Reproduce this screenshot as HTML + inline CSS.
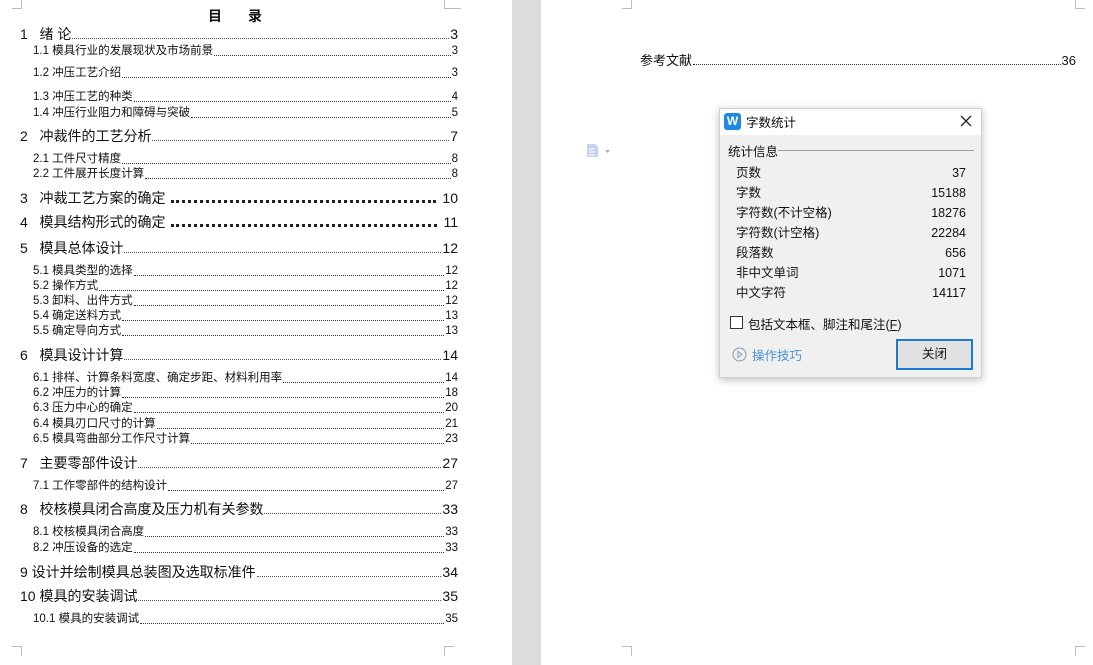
<!DOCTYPE html><html><head><meta charset="utf-8"><style>
*{margin:0;padding:0;box-sizing:border-box}
body{width:1093px;height:665px;background:#fff;position:relative;overflow:hidden;font-family:"Liberation Sans","Noto Sans CJK SC",sans-serif;color:#111}
.band{position:absolute;left:512px;top:0;width:29px;height:665px;background:#dcdcde}
.l{position:absolute;display:flex;align-items:flex-end;white-space:nowrap;line-height:1;margin-top:2px}
.l .d{flex:1;border-bottom:1px dotted #333;margin:0 1px 2px}
.m{left:20px;width:438px;font-size:14px}
.s{left:33px;width:425px;font-size:11.5px}
.m .d{border-bottom:1px dotted #555}
.b .d{border-bottom:3px dotted #222;margin:0 6px 2px}
.c{position:absolute;width:10px;height:10px;border-color:#bbb;border-style:solid;border-width:0}
</style></head><body>
<div class="band"></div>
<div class="c" style="left:12px;top:-1px;border-right-width:1px;border-bottom-width:1px"></div>
<div class="c" style="left:444px;top:-1px;border-left-width:1px;border-bottom-width:1px;width:17px"></div>
<div class="c" style="left:12px;top:646px;border-right-width:1px;border-top-width:1px"></div>
<div class="c" style="left:444px;top:646px;border-left-width:1px;border-top-width:1px"></div>
<div class="c" style="left:622px;top:-1px;border-right-width:1px;border-bottom-width:1px"></div>
<div class="c" style="left:1075px;top:-1px;border-left-width:1px;border-bottom-width:1px"></div>
<div class="c" style="left:622px;top:646px;border-right-width:1px;border-top-width:1px"></div>
<div class="c" style="left:1075px;top:646px;border-left-width:1px;border-top-width:1px"></div>
<div style="position:absolute;left:208px;top:6px;font-size:14px;font-weight:bold;letter-spacing:26px">目录</div>
<div class="l m" style="top:25px"><span>1&nbsp;&nbsp;&nbsp;绪&nbsp;论</span><span class="d"></span><span>3</span></div>
<div class="l s" style="top:44px"><span>1.1 模具行业的发展现状及市场前景</span><span class="d"></span><span>3</span></div>
<div class="l s" style="top:66px"><span>1.2 冲压工艺介绍</span><span class="d"></span><span>3</span></div>
<div class="l s" style="top:90px"><span>1.3 冲压工艺的种类</span><span class="d"></span><span>4</span></div>
<div class="l s" style="top:106px"><span>1.4 冲压行业阻力和障碍与突破</span><span class="d"></span><span>5</span></div>
<div class="l m" style="top:127px"><span>2&nbsp;&nbsp;&nbsp;冲裁件的工艺分析</span><span class="d"></span><span>7</span></div>
<div class="l s" style="top:152px"><span>2.1 工件尺寸精度</span><span class="d"></span><span>8</span></div>
<div class="l s" style="top:167px"><span>2.2 工件展开长度计算</span><span class="d"></span><span>8</span></div>
<div class="l m b" style="top:189px"><span>3&nbsp;&nbsp;&nbsp;冲裁工艺方案的确定</span><span class="d"></span><span>10</span></div>
<div class="l m b" style="top:213px"><span>4&nbsp;&nbsp;&nbsp;模具结构形式的确定</span><span class="d"></span><span>11</span></div>
<div class="l m" style="top:239px"><span>5&nbsp;&nbsp;&nbsp;模具总体设计</span><span class="d"></span><span>12</span></div>
<div class="l s" style="top:264px"><span>5.1 模具类型的选择</span><span class="d"></span><span>12</span></div>
<div class="l s" style="top:279px"><span>5.2 操作方式</span><span class="d"></span><span>12</span></div>
<div class="l s" style="top:294px"><span>5.3 卸料、出件方式</span><span class="d"></span><span>12</span></div>
<div class="l s" style="top:309px"><span>5.4 确定送料方式</span><span class="d"></span><span>13</span></div>
<div class="l s" style="top:324px"><span>5.5 确定导向方式</span><span class="d"></span><span>13</span></div>
<div class="l m" style="top:346px"><span>6&nbsp;&nbsp;&nbsp;模具设计计算</span><span class="d"></span><span>14</span></div>
<div class="l s" style="top:371px"><span>6.1 排样、计算条料宽度、确定步距、材料利用率</span><span class="d"></span><span>14</span></div>
<div class="l s" style="top:386px"><span>6.2 冲压力的计算</span><span class="d"></span><span>18</span></div>
<div class="l s" style="top:401px"><span>6.3 压力中心的确定</span><span class="d"></span><span>20</span></div>
<div class="l s" style="top:417px"><span>6.4 模具刃口尺寸的计算</span><span class="d"></span><span>21</span></div>
<div class="l s" style="top:432px"><span>6.5 模具弯曲部分工作尺寸计算</span><span class="d"></span><span>23</span></div>
<div class="l m" style="top:454px"><span>7&nbsp;&nbsp;&nbsp;主要零部件设计</span><span class="d"></span><span>27</span></div>
<div class="l s" style="top:479px"><span>7.1 工作零部件的结构设计</span><span class="d"></span><span>27</span></div>
<div class="l m" style="top:500px"><span>8&nbsp;&nbsp;&nbsp;校核模具闭合高度及压力机有关参数</span><span class="d"></span><span>33</span></div>
<div class="l s" style="top:525px"><span>8.1 校核模具闭合高度</span><span class="d"></span><span>33</span></div>
<div class="l s" style="top:541px"><span>8.2 冲压设备的选定</span><span class="d"></span><span>33</span></div>
<div class="l m" style="top:563px"><span>9 设计并绘制模具总装图及选取标准件</span><span class="d"></span><span>34</span></div>
<div class="l m" style="top:587px"><span>10 模具的安装调试</span><span class="d"></span><span>35</span></div>
<div class="l s" style="top:612px"><span>10.1 模具的安装调试</span><span class="d"></span><span>35</span></div>
<div class="l" style="left:640px;width:436px;top:52px;font-size:13px"><span>参考文献</span><span class="d"></span><span>36</span></div>
<svg style="position:absolute;left:586px;top:143px" width="24" height="16"><path d="M1 1h8l3 3v10H1z" fill="#c5d3ea"/><path d="M3 6h6M3 9h6M3 12h6" stroke="#fff"/><path d="M19 7h5l-2.5 3z" fill="#aaa"/></svg>
<div style="position:absolute;left:719px;top:108px;width:263px;height:270px;background:#f0f0f0;border:1px solid #d0d0d0;box-shadow:0 2px 8px rgba(0,0,0,.25)">
<div style="height:26px;background:#fff;position:relative">
<div style="position:absolute;left:4px;top:4px;width:17px;height:17px;background:#1e88e5;border-radius:3px;color:#fff;font-size:12px;font-weight:bold;text-align:center;line-height:17px">W</div>
<div style="position:absolute;left:26px;top:3px;font-size:12.5px">字数统计</div>
<svg style="position:absolute;left:240px;top:6px" width="12" height="12"><path d="M1 1L11 11M11 1L1 11" stroke="#222" stroke-width="1.3"/></svg></div>
<div style="position:absolute;left:8px;top:32px;font-size:12.5px">统计信息</div>
<div style="position:absolute;left:58px;top:41px;width:196px;border-top:1px solid #999"></div>
<div style="position:absolute;left:16px;top:54px;width:230px;font-size:12.5px;line-height:20px">
<div style="display:flex;justify-content:space-between"><span>页数</span><span>37</span></div>
<div style="display:flex;justify-content:space-between"><span>字数</span><span>15188</span></div>
<div style="display:flex;justify-content:space-between"><span>字符数(不计空格)</span><span>18276</span></div>
<div style="display:flex;justify-content:space-between"><span>字符数(计空格)</span><span>22284</span></div>
<div style="display:flex;justify-content:space-between"><span>段落数</span><span>656</span></div>
<div style="display:flex;justify-content:space-between"><span>非中文单词</span><span>1071</span></div>
<div style="display:flex;justify-content:space-between"><span>中文字符</span><span>14117</span></div></div>
<div style="position:absolute;left:10px;top:207px;width:13px;height:13px;border:1px solid #333;background:#fff"></div>
<div style="position:absolute;left:28px;top:205px;font-size:12.5px">包括文本框、脚注和尾注(<u>F</u>)</div>
<svg style="position:absolute;left:12px;top:238px" width="15" height="15"><circle cx="7.5" cy="7.5" r="6.5" fill="none" stroke="#8899aa"/><path d="M6 4.5v6l4-3z" fill="none" stroke="#8899aa"/></svg>
<div style="position:absolute;left:32px;top:236px;font-size:12.5px;color:#4a90d9">操作技巧</div>
<div style="position:absolute;left:176px;top:230px;width:77px;height:31px;border:2px solid #1a7ad4;background:#e2e2e2;text-align:center;line-height:27px;font-size:12.5px">关闭</div>
</div>
</body></html>
